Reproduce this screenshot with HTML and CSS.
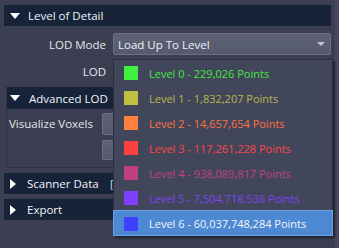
FILE: index.html
```html
<!DOCTYPE html>
<html lang="en">
<head>
<meta charset="UTF-8">
<title>Level of Detail</title>
<link rel="stylesheet" href="styles.css">
</head>
<body>
<div class="panel">
    <div class="section-header"><span class="tri-down"></span><span class="section-title">Level of Detail</span></div>

    <div class="form-row mode-row">
        <span class="form-label">LOD Mode</span>
        <div class="combo"><span class="combo-text">Load Up To Level</span><span class="combo-arrow"></span></div>
    </div>
    <div class="form-row lod-row">
        <span class="form-label">LOD</span>
    </div>

    <div class="group">
        <div class="group-header"><span class="tri-down"></span><span class="section-title">Advanced LOD</span></div>
        <div class="voxel-row">
            <span class="voxel-label">Visualize Voxels</span>
            <div class="voxel-buttons">
                <div class="small-btn"></div>
                <div class="small-btn second"></div>
            </div>
        </div>
    </div>

    <div class="section-header closed scanner"><span class="tri-right"></span><span class="section-title title-fixed">Scanner Data</span><span class="bracket">[</span></div>
    <div class="section-header closed export"><span class="tri-right"></span><span class="section-title">Export</span></div>

    <!-- open combo popup -->
    <div class="popup">
        <div class="popup-item"><span class="swatch" style="background:#3ff23f"></span><span class="item-text" style="color:#3fea3f">Level 0 - 229,026 Points</span></div>
        <div class="popup-item"><span class="swatch" style="background:#c0c040"></span><span class="item-text" style="color:#b9b84a">Level 1 - 1,832,207 Points</span></div>
        <div class="popup-item"><span class="swatch" style="background:#ff7f3f"></span><span class="item-text" style="color:#ff7040">Level 2 - 14,657,654 Points</span></div>
        <div class="popup-item"><span class="swatch" style="background:#ff4040"></span><span class="item-text" style="color:#ff4545">Level 3 - 117,261,228 Points</span></div>
        <div class="popup-item"><span class="swatch" style="background:#c0407f"></span><span class="item-text" style="color:#c2427c">Level 4 - 938,089,817 Points</span></div>
        <div class="popup-item"><span class="swatch" style="background:#803fff"></span><span class="item-text" style="color:#7d44f4">Level 5 - 7,504,718,536 Points</span></div>
        <div class="popup-item selected"><span class="swatch" style="background:#4040ff"></span><span class="item-text">Level 6 - 60,037,748,284 Points</span></div>
    </div>
</div>
</body>
</html>
```

FILE: styles.css
```css
body {
    margin: 0;
    background-color: #3b3f51;
    font-family: "Open Sans", "Noto Sans", sans-serif;
    font-size: 11px;
    color: #e4e6ee;
}

.panel {
    position: relative;
    width: 339px;
    height: 248px;
    padding: 5px 4px 0 4px;
    box-sizing: border-box;
    border-right: 4px solid #444859;
}

.section-header {
    display: flex;
    align-items: center;
    height: 21px;
    background-color: #162339;
    color: #f2f4f8;
}

.section-title {
    font-size: 11.5px;
}

.tri-down {
    width: 0;
    height: 0;
    margin: 0 8px 0 6px;
    border-left: 5px solid transparent;
    border-right: 5px solid transparent;
    border-top: 6px solid #ffffff;
}

.tri-right {
    width: 0;
    height: 0;
    margin: 0 11px 0 6px;
    border-top: 5px solid transparent;
    border-bottom: 5px solid transparent;
    border-left: 6px solid #ffffff;
}

.form-row {
    display: flex;
    align-items: center;
}

.form-label {
    width: 109px;
    padding-right: 7px;
    box-sizing: border-box;
    text-align: right;
    font-size: 11.5px;
}

.mode-row {
    margin-top: 7px;
    height: 22px;
}

.lod-row {
    margin-top: 4px;
    height: 24px;
}

.combo {
    display: flex;
    align-items: center;
    justify-content: space-between;
    flex: 1;
    height: 22px;
    box-sizing: border-box;
    padding: 0 5px 0 4px;
    border: 1px solid #6b6f83;
    border-radius: 2px;
    background: linear-gradient(#5e6276, #555a6d);
    color: #f0f2f6;
    font-size: 11.5px;
}

.combo-arrow {
    width: 0;
    height: 0;
    border-left: 4px solid transparent;
    border-right: 4px solid transparent;
    border-top: 4px solid #c6c9d2;
}

.group {
    margin: 4px 0 0 2px;
    height: 80px;
    border: 1px solid #2e3243;
    border-top: none;
}

.group-header {
    display: flex;
    align-items: center;
    height: 22px;
    background-color: #162339;
    color: #f2f4f8;
}

.group-header .tri-down {
    margin-left: 3px;
    margin-right: 9px;
}

.voxel-row {
    display: flex;
    margin-top: 4px;
}

.voxel-label {
    width: 93px;
    padding-left: 2px;
    line-height: 22px;
    font-size: 11.5px;
}

.voxel-buttons {
    display: flex;
    flex-direction: column;
    gap: 5px;
}

.small-btn {
    width: 40px;
    height: 22px;
    box-sizing: border-box;
    border: 1px solid #6b6f83;
    border-radius: 2px;
    background: linear-gradient(#5e6276, #555a6d);
}

.small-btn.second {
    height: 20px;
}

.scanner {
    margin-top: 5px;
}

.export {
    margin-top: 5px;
}

.title-fixed {
    width: 83px;
}

.bracket {
    color: #bfe8ec;
}

.popup {
    position: absolute;
    left: 113px;
    top: 59px;
    width: 220px;
    box-sizing: border-box;
    border: 1px solid #2a2d3b;
    background-color: #42465a;
    box-shadow: 2px 2px 2px rgba(0, 0, 0, 0.45);
}

.popup-item {
    display: flex;
    align-items: center;
    height: 25px;
    padding: 1px 0 0 10px;
    box-sizing: border-box;
}

.popup-item.selected {
    margin: 0 -1px -1px -1px;
    padding-left: 11px;
    height: 26px;
    background-color: #4d88d3;
    box-shadow: inset 0 0 0 1px #6aa0e2;
    color: #f4f6fa;
}

.swatch {
    width: 14px;
    height: 14px;
    margin-right: 11px;
}
```
